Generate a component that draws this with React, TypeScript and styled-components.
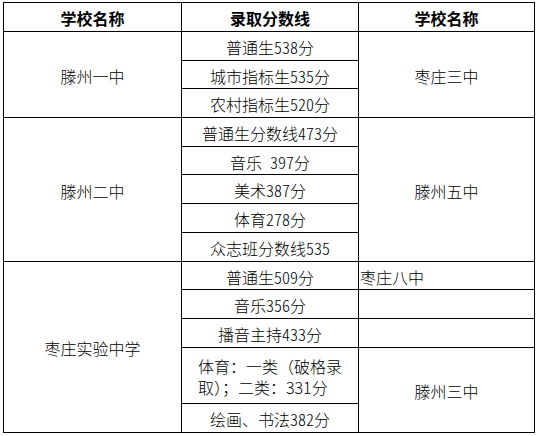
import React from "react";
import styled, { createGlobalStyle } from "styled-components";

// 录取分数线 table, laid out on a grid so every rule lands on its pixel row
type Cell = {
  text?: React.ReactNode;
  col: number;
  row: number;
  span?: number;
  head?: boolean;
  align?: "center" | "left";
};

const rowHeights = [29, 29, 28, 29, 29, 28, 29, 29, 29, 28, 29, 29, 56, 29];

const GlobalStyle = createGlobalStyle`
  html, body {
    margin: 0;
    padding: 0;
    background: #ffffff;
  }
  body {
    font-family: "Noto Sans CJK SC", "Noto Sans", sans-serif;
    color: #000000;
  }
`;

const Page = styled.div`
  padding: 2px 0 0 3px;
`;

const Table = styled.div`
  display: grid;
  grid-template-columns: 178px 177px 176px;
  grid-template-rows: ${rowHeights.map((h) => `${h}px`).join(" ")};
  width: max-content;
  border-top: 1px solid #000;
  border-left: 1px solid #000;
`;

const Td = styled.div<{ $head?: boolean; $align: "center" | "left" }>`
  display: flex;
  align-items: center;
  justify-content: ${(p) => (p.$align === "left" ? "flex-start" : "center")};
  padding: ${(p) => (p.$align === "left" ? "2px 0 0 1px" : "2px 0 0 0")};
  border-right: 1px solid #000;
  border-bottom: 1px solid #000;
  font-size: 16px;
  line-height: 20px;
  font-weight: ${(p) => (p.$head ? 700 : 300)};
  font-feature-settings: "hwid";
  white-space: nowrap;
  box-sizing: border-box;
`;

// two-line cell keeps its full-width brackets and colons
const Wrapped = styled.span`
  display: inline-block;
  text-align: left;
  white-space: nowrap;
  font-feature-settings: normal;
  line-height: 21px;
`;

const cells: Cell[] = [
  { text: "学校名称", col: 1, row: 1, head: true },
  { text: "录取分数线", col: 2, row: 1, head: true },
  { text: "学校名称", col: 3, row: 1, head: true },

  { text: "滕州一中", col: 1, row: 2, span: 3 },
  { text: "普通生538分", col: 2, row: 2 },
  { text: "城市指标生535分", col: 2, row: 3 },
  { text: "农村指标生520分", col: 2, row: 4 },
  { text: "枣庄三中", col: 3, row: 2, span: 3 },

  { text: "滕州二中", col: 1, row: 5, span: 5 },
  { text: "普通生分数线473分", col: 2, row: 5 },
  { text: "音乐 397分", col: 2, row: 6 },
  { text: "美术387分", col: 2, row: 7 },
  { text: "体育278分", col: 2, row: 8 },
  { text: "众志班分数线535", col: 2, row: 9 },
  { text: "滕州五中", col: 3, row: 5, span: 5 },

  { text: "枣庄实验中学", col: 1, row: 10, span: 5 },
  { text: "普通生509分", col: 2, row: 10 },
  { text: "音乐356分", col: 2, row: 11 },
  { text: "播音主持433分", col: 2, row: 12 },
  {
    text: (
      <Wrapped>
        体育：一类（破格录
        <br />
        取）；二类：331分
      </Wrapped>
    ),
    col: 2,
    row: 13,
  },
  { text: "绘画、书法382分", col: 2, row: 14 },
  { text: "枣庄八中", col: 3, row: 10, align: "left" },
  { col: 3, row: 11 },
  { col: 3, row: 12 },
  { text: "滕州三中", col: 3, row: 13, span: 2 },
];

export default function App() {
  return (
    <>
      <GlobalStyle />
      <Page>
        <Table>
          {cells.map((c, i) => (
            <Td
              key={i}
              $head={c.head}
              $align={c.align ?? "center"}
              style={{
                gridColumn: c.col,
                gridRow: `${c.row} / span ${c.span ?? 1}`,
              }}
            >
              {c.text}
            </Td>
          ))}
        </Table>
      </Page>
    </>
  );
}
